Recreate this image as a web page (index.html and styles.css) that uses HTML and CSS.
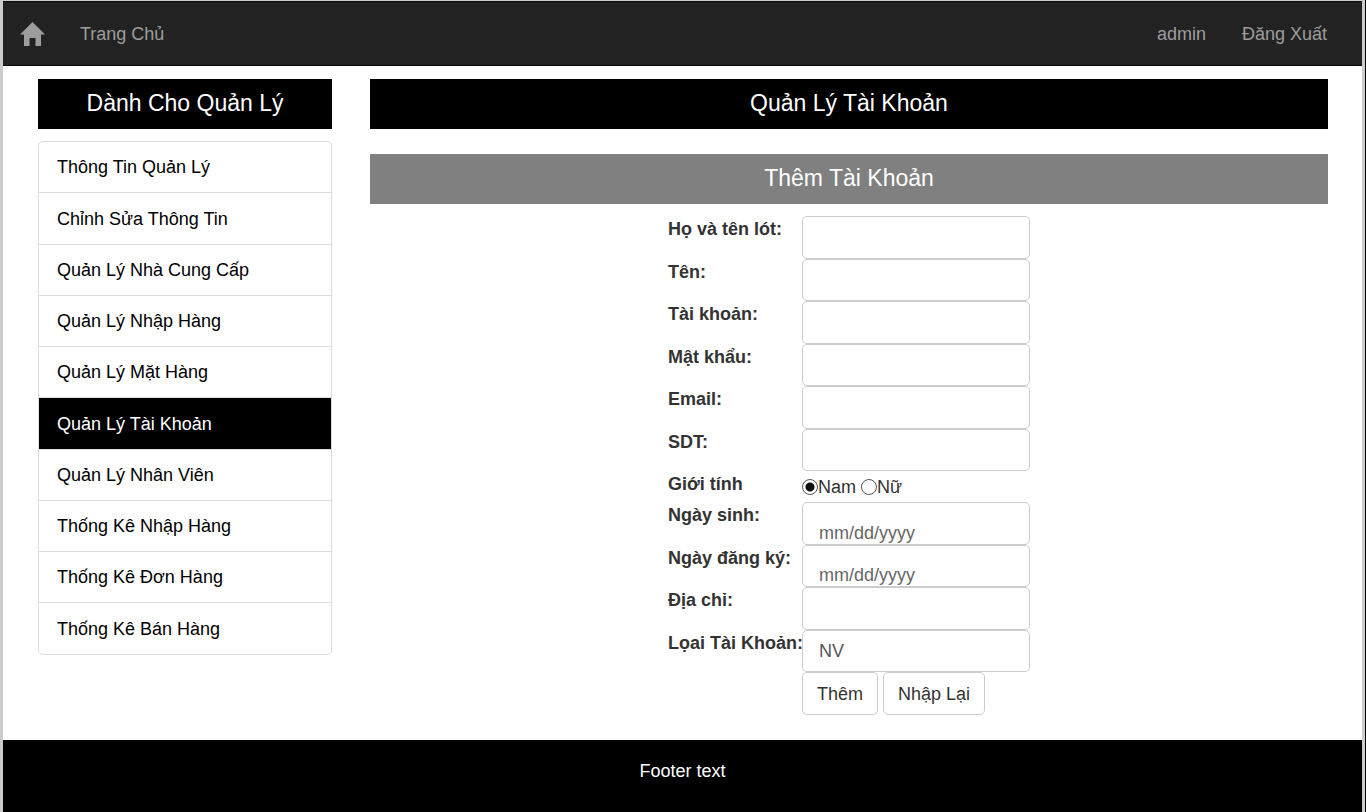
FILE: index.html
```html
<!DOCTYPE html>
<html lang="vi">
<head>
<meta charset="utf-8">
<meta name="viewport" content="width=device-width, initial-scale=1">
<title>Quản Lý Tài Khoản</title>
<link rel="stylesheet" href="styles.css">
</head>
<body>
<div class="page">
  <nav class="navbar">
    <a class="brand" href="#" aria-label="Home">
      <svg class="home-icon" viewBox="0 0 25 24" aria-hidden="true"><path d="M12.5 0 25 12.600h-4V24h-5.500v-8h-6v8H4V12.600H0z"/></svg>
    </a>
    <a class="nav-link" href="#">Trang Chủ</a>
    <div class="nav-right">
      <a class="nav-link" href="#">admin</a>
      <a class="nav-link" href="#">Đăng Xuất</a>
    </div>
  </nav>

  <div class="content">
    <aside class="sidebar">
      <h2 class="title">Dành Cho Quản Lý</h2>
      <div class="menu">
        <a class="menu-item" href="#">Thông Tin Quản Lý</a>
        <a class="menu-item" href="#">Chỉnh Sửa Thông Tin</a>
        <a class="menu-item" href="#">Quản Lý Nhà Cung Cấp</a>
        <a class="menu-item" href="#">Quản Lý Nhập Hàng</a>
        <a class="menu-item" href="#">Quản Lý Mặt Hàng</a>
        <a class="menu-item active" href="#">Quản Lý Tài Khoản</a>
        <a class="menu-item" href="#">Quản Lý Nhân Viên</a>
        <a class="menu-item" href="#">Thống Kê Nhập Hàng</a>
        <a class="menu-item" href="#">Thống Kê Đơn Hàng</a>
        <a class="menu-item" href="#">Thống Kê Bán Hàng</a>
      </div>
    </aside>

    <main class="main">
      <h1 class="title">Quản Lý Tài Khoản</h1>
      <h2 class="title title-sub">Thêm Tài Khoản</h2>
      <form class="form">
        <div class="row"><label class="label" for="ho">Họ và tên lót:</label><input class="field" id="ho" type="text"></div>
        <div class="row"><label class="label" for="ten">Tên:</label><input class="field" id="ten" type="text"></div>
        <div class="row"><label class="label" for="tk">Tài khoản:</label><input class="field" id="tk" type="text"></div>
        <div class="row"><label class="label" for="mk">Mật khẩu:</label><input class="field" id="mk" type="password"></div>
        <div class="row"><label class="label" for="email">Email:</label><input class="field" id="email" type="email"></div>
        <div class="row"><label class="label" for="sdt">SDT:</label><input class="field" id="sdt" type="text"></div>
        <div class="row row-gender" role="radiogroup" aria-labelledby="gt">
          <span class="label" id="gt">Giới tính</span>
          <div class="radios">
            <label class="choice"><input class="radio" type="radio" name="gt" checked>Nam</label>
            <label class="choice"><input class="radio" type="radio" name="gt">Nữ</label>
          </div>
        </div>
        <div class="row"><label class="label" for="ns">Ngày sinh:</label><input class="field field-date" id="ns" type="text" placeholder="mm/dd/yyyy"></div>
        <div class="row"><label class="label" for="ndk">Ngày đăng ký:</label><input class="field field-date" id="ndk" type="text" placeholder="mm/dd/yyyy"></div>
        <div class="row"><label class="label" for="dc">Địa chỉ:</label><input class="field" id="dc" type="text"></div>
        <div class="row"><label class="label" for="loai">Lọai Tài Khoản:</label><input class="field" id="loai" type="text" value="NV"></div>
        <div class="row row-buttons">
          <div class="buttons">
            <button class="btn" type="submit">Thêm</button>
            <button class="btn" type="reset">Nhập Lại</button>
          </div>
        </div>
      </form>
    </main>
  </div>

  <footer class="footer">Footer text</footer>
</div>
</body>
</html>
```

FILE: styles.css
```css
* {
  box-sizing: border-box;
}

html {
  background: #000;
}

body {
  margin: 0 1px 0 0;
  font-family: "Liberation Sans", Arial, sans-serif;
  font-size: 18px;
  line-height: 26px;
  color: #333;
}

a {
  text-decoration: none;
}

.page {
  display: flex;
  flex-direction: column;
  min-height: 100vh;
  background: #fff;
  border: solid #ccc;
  border-width: 1px 3px 0;
}

.navbar {
  display: flex;
  align-items: center;
  height: 65px;
  padding: 0 17px;
  background: #222;
  border: solid #080808;
  border-width: 1px 0;
}

.brand {
  display: flex;
  margin-right: 17px;
}

.home-icon {
  width: 25px;
  height: 24px;
  fill: #9d9d9d;
}

.nav-link {
  padding: 0 18px;
  color: #9d9d9d;
}

.nav-right {
  display: flex;
  margin-left: auto;
}

.content {
  display: grid;
  grid-template-columns: repeat(12, 1fr);
  column-gap: 38px;
  padding: 13px 34px 25px 35px;
}

.sidebar {
  grid-column: span 3;
}

.main {
  grid-column: span 9;
}

.title {
  margin: 0;
  padding: 11px 0 13px;
  background: #000;
  color: #fff;
  font-size: 23px;
  font-weight: 400;
  line-height: 26px;
  text-align: center;
}

.title-sub {
  margin-top: 25px;
  background: gray;
}

.menu {
  margin-top: 12px;
  border: 1px solid #ddd;
  border-radius: 5px;
}

.menu-item {
  display: flex;
  align-items: center;
  min-height: 51px;
  padding: 0 18px;
  border-bottom: 1px solid #ddd;
  color: #000;
}

.menu-item:nth-child(4n + 2) {
  min-height: 52px;
}

.menu .menu-item:last-child {
  min-height: 51px;
  border-bottom: 0;
}

.menu-item.active {
  background: #000;
  color: #fff;
}

.form {
  width: max-content;
  margin: 12px auto 0;
}

.row {
  display: grid;
  grid-template-columns: 134px 228px;
  min-height: 43px;
}

.row:nth-child(-n + 6):nth-child(even),
.row:nth-child(9),
.row:nth-child(11) {
  min-height: 42px;
}

.form .row-gender {
  min-height: 31px;
}

.label {
  font-weight: 700;
  white-space: nowrap;
}

.field {
  width: 100%;
  padding: 0 16px;
  border: 1px solid #ccc;
  border-radius: 5px;
  background: #fff;
  color: #555;
  font: inherit;
}

.field-date {
  padding-top: 18px;
  line-height: 22px;
}

.field::placeholder {
  color: #666;
  opacity: 1;
}

.radios {
  display: flex;
  align-items: center;
  gap: 5px;
}

.choice {
  display: flex;
  align-items: center;
}

.radio {
  appearance: none;
  width: 16px;
  height: 16px;
  margin: 0;
  border: 1px solid #555;
  border-radius: 50%;
  background: #fff;
}

.radio:checked {
  background: radial-gradient(circle, #111 0 4px, #fff 5px);
}

.buttons {
  display: flex;
  grid-column: 2;
  gap: 5px;
}

.btn {
  padding: 0 14px;
  border: 1px solid #ccc;
  border-radius: 5px;
  background: #fff;
  color: #333;
  font: inherit;
}

.footer {
  flex: 1;
  padding: 18px;
  background: #000;
  color: #fff;
  text-align: center;
}
```
